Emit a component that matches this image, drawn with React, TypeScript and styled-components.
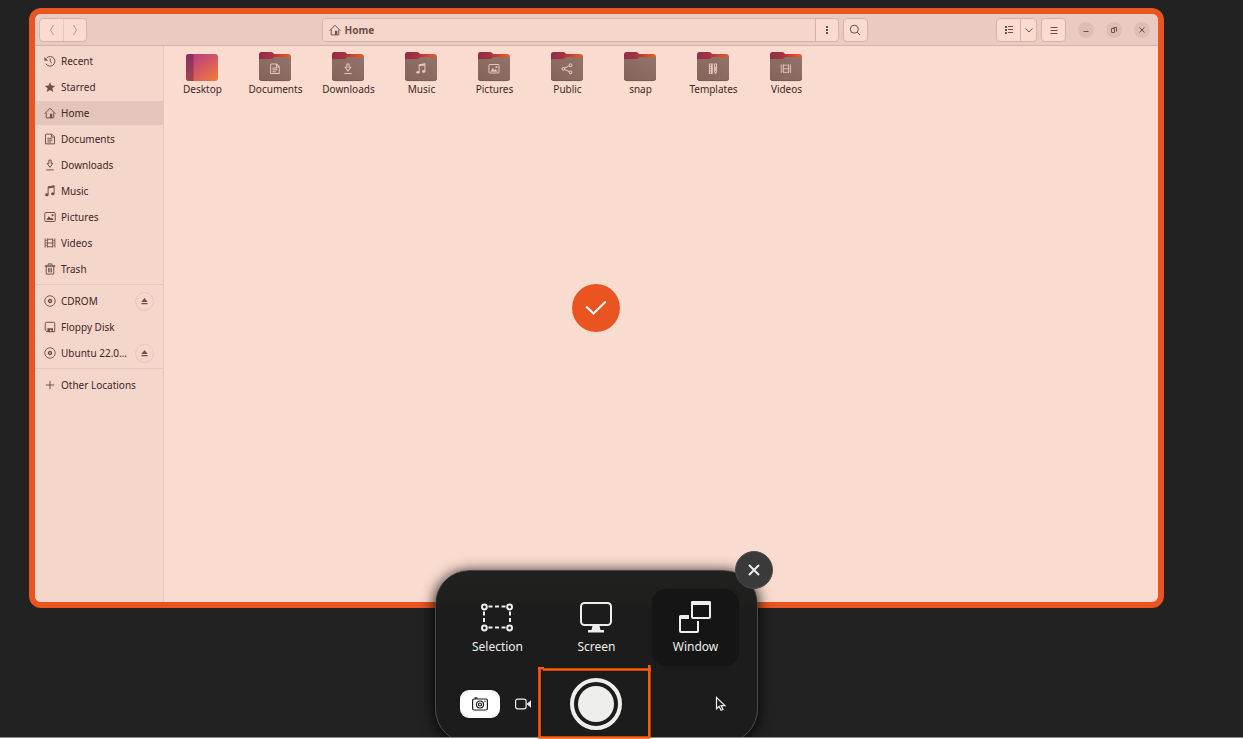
import React from "react";
import styled, { createGlobalStyle } from "styled-components";

const ink = "#6f5049";
const edge = "#d3b4aa";

const GlobalStyle = createGlobalStyle`
  *, *::before, *::after { box-sizing: border-box; }
  body {
    margin: 0;
    background: #fff;
    font-family: "Noto Sans", sans-serif;
    font-size: 10px;
    line-height: 14px;
  }
  button { font: inherit; color: inherit; padding: 0; border: 0; background: none; }
  ul { list-style: none; margin: 0; padding: 0; }
  svg { display: block; flex: none; }
`;

const Page = styled.main`
  position: relative;
  height: 100vh;
  min-height: 480px;
  display: flex;
  flex-direction: column;
  overflow: hidden;
`;

const Desktop = styled.div`
  position: relative;
  flex: 1;
  min-height: 0;
  margin-bottom: 1px;
  display: flex;
  padding: 8px 79px 129px 29px;
  background: #222;
  border-bottom: 1px solid #8c8c8c;
  overflow: hidden;
`;

const FileWindow = styled.section`
  position: relative;
  flex: 1;
  min-width: 0;
  display: flex;
  flex-direction: column;
  border: 6px solid #e95420;
  border-radius: 12px;
  background: #fadbd0;
  color: #42261f;
  overflow: hidden;
`;

const HeaderBar = styled.header`
  display: grid;
  grid-template-columns: 1fr auto 1fr;
  align-items: center;
  height: 32px;
  padding: 0 8px 0 4px;
  background: #e9cbc1;
  border-bottom: 1px solid ${edge};
  color: ${ink};
`;

const HeaderCell = styled.div<{ $end?: boolean }>`
  display: flex;
  align-items: center;
  justify-content: ${(p) => (p.$end ? "flex-end" : "flex-start")};
  gap: 4px;
`;

const Linked = styled.div`
  display: flex;
  height: 24px;
  border: 1px solid ${edge};
  border-radius: 4px;
  background: #fadbd0;
  overflow: hidden;
  > * + * { border-left: 1px solid ${edge}; }
`;

const ToolButton = styled.button<{ $narrow?: boolean; $dim?: boolean }>`
  width: ${(p) => (p.$narrow ? 16 : 23)}px;
  display: flex;
  align-items: center;
  justify-content: center;
  opacity: ${(p) => (p.$dim ? 0.5 : 1)};
`;

const PathBar = styled(Linked)`
  width: min(517px, 46vw);
`;

const PathCrumb = styled.div`
  flex: 1;
  display: flex;
  align-items: center;
  gap: 4px;
  padding-left: 6px;
  background: #f5d6cb;
  font-weight: 700;
`;

const WindowControls = styled.div`
  display: flex;
  gap: 12px;
  margin-left: 8px;
`;

const WindowControl = styled.button`
  display: grid;
  place-items: center;
  width: 16px;
  height: 16px;
  border-radius: 50%;
  background: #dcbeb4;
`;

const Body = styled.div`
  flex: 1;
  min-height: 0;
  display: flex;
`;

const Sidebar = styled.nav`
  width: 129px;
  flex: none;
  padding-top: 3px;
  background: #f5d6cb;
  border-right: 1px solid #e6c6bc;
`;

const Places = styled.ul`
  display: flex;
  flex-direction: column;
  gap: 2px;
  & + & {
    margin-top: 3px;
    padding-top: 4px;
    border-top: 1px solid #e6c6bc;
  }
`;

const Place = styled.li<{ $active?: boolean }>`
  display: flex;
  align-items: center;
  height: 24px;
  padding: 0 9px;
  background: ${(p) => (p.$active ? "#e3c5bb" : "transparent")};
`;

const PlaceLink = styled.a`
  flex: 1;
  display: flex;
  align-items: center;
  gap: 5px;
  color: inherit;
  text-decoration: none;
  white-space: nowrap;
  svg { color: ${ink}; }
`;

const EjectButton = styled.button`
  display: grid;
  place-items: center;
  width: 19px;
  height: 19px;
  border: 1px solid #e6c6bc;
  border-radius: 50%;
  color: ${ink};
`;

const FileGrid = styled.ul`
  flex: 1;
  display: flex;
  flex-wrap: wrap;
  align-content: flex-start;
  && { padding: 5px 2px; }
`;

const FileItem = styled.li`
  width: 73px;
  display: flex;
  flex-direction: column;
  align-items: center;
`;

const CheckBadge = styled.div`
  position: absolute;
  top: 50%;
  left: 50%;
  width: 48px;
  height: 48px;
  margin: -24px -25px;
  display: grid;
  place-items: center;
  border-radius: 50%;
  background: #e95420;
  color: #fff;
`;

const PanelLayer = styled.div`
  position: absolute;
  inset: 0 50px -6px 0;
  display: flex;
  justify-content: center;
  align-items: flex-end;
`;

const Panel = styled.section`
  position: relative;
  width: 323px;
  padding: 18px 18px 12px;
  display: flex;
  flex-direction: column;
  gap: 12px;
  border: 1px solid #4a4a49;
  border-radius: 34px;
  background: linear-gradient(#20201e 0, #1f1f1d 30px, #1c1c1c 40px);
  box-shadow: 0 2px 14px 1px rgba(0, 0, 0, 0.85);
  color: #eeeeec;
`;

const CloseButton = styled.button`
  position: absolute;
  top: -20px;
  right: -16px;
  width: 38px;
  height: 38px;
  display: grid;
  place-items: center;
  border: 1px solid #4c4c4c;
  border-radius: 50%;
  background: #3a3a3a;
`;

const Modes = styled.div`
  display: grid;
  grid-template-columns: repeat(3, 1fr);
  gap: 12px;
`;

const ModeButton = styled.button<{ $active?: boolean }>`
  height: 77px;
  display: flex;
  flex-direction: column;
  align-items: center;
  justify-content: center;
  gap: 6px;
  border-radius: 14px;
  background: ${(p) => (p.$active ? "#151515" : "transparent")};
  font-size: 12px;
  line-height: 16px;
`;

const CaptureRow = styled.div`
  display: grid;
  grid-template-columns: 1fr auto 1fr;
  align-items: center;
  padding-right: 1px;
`;

const MediaSwitch = styled.div`
  display: flex;
  gap: 3px;
  margin-left: 6px;
`;

const MediaButton = styled.button<{ $active?: boolean }>`
  width: 40px;
  height: 28px;
  display: grid;
  place-items: center;
  border-radius: 9px;
  background: ${(p) => (p.$active ? "#fff" : "transparent")};
  color: ${(p) => (p.$active ? "#1e1e1d" : "#eeeeec")};
`;

const Shutter = styled.button`
  width: 52px;
  height: 52px;
  border: 4px solid #eeeeec;
  border-radius: 50%;
  padding: 4px;
  &::before {
    content: "";
    display: block;
    height: 100%;
    border-radius: 50%;
    background: #eeeeec;
  }
`;

const Pointer = styled.svg`
  justify-self: end;
  margin-right: 11px;
`;

const MarkLayer = styled.div`
  position: absolute;
  inset: auto 50px 0 0;
  display: flex;
  justify-content: center;
  padding-right: 4px;
  pointer-events: none;
`;

type IconName =
  | "recent" | "star" | "home" | "document" | "download" | "music" | "picture"
  | "video" | "trash" | "disc" | "floppy" | "plus" | "share" | "template";

const glyphs: Record<IconName, React.ReactNode> = {
  recent: (
    <>
      <path d="M3.500 4A6.400 6.400 0 1 1 2.500 11.500M8.300 4.500v4.300l2.200 2" />
      <path d="M.5 2.500v5h5z" fill="currentColor" stroke="none" />
    </>
  ),
  star: <path d="M8 1.500l2 4.600 4.900.4-3.700 3.300 1.100 4.900L8 12.100l-4.300 2.600 1.100-4.900L1.100 6.500 6 6.100z" fill="currentColor" stroke="none" />,
  home: (
    <>
      <path d="M.8 9L8 1.600 15.200 9M3 7.500v7h10v-7" />
      <path d="M8 9h3v5.500H8z" fill="currentColor" stroke="none" />
    </>
  ),
  document: <path d="M3 1.500h7.500L14 5v9.500H2V2.500q0-1 1-1zM10 1.500V5.500h4M4.500 7h6M4.500 9.500h7M4.500 12h5" />,
  download: <path d="M6.500 1.500h3v4.300h2.300L8 11.200 4.200 5.800h2.300zM3 14.500h10" />,
  music: (
    <>
      <path d="M5.500 12.500V2.500l8-1.200v10" />
      <path d="M5.500 2l8-1.200v2.500l-8 1.200z" fill="currentColor" stroke="none" />
      <ellipse cx="3.800" cy="13" rx="2.300" ry="2" fill="currentColor" stroke="none" />
      <ellipse cx="11.800" cy="11.800" rx="2.300" ry="2" fill="currentColor" stroke="none" />
    </>
  ),
  picture: (
    <>
      <rect x="1" y="2" width="14" height="12" rx="1.500" />
      <path d="M3 12l3.500-5 2.500 3 1.500-1.500L13 12z" fill="currentColor" stroke="none" />
      <circle cx="11.500" cy="5.500" r="1.400" fill="currentColor" stroke="none" />
    </>
  ),
  video: (
    <>
      <path d="M1.500 2v12M14.500 2v12M4.500 2v12M11.500 2v12M4.500 3h7M4.500 8h7M4.500 13h7" strokeWidth="1.200" />
      <path d="M1.500 4.500h3M1.500 8h3M1.500 11.500h3M11.500 4.500h3M11.500 8h3M11.500 11.500h3" strokeWidth=".8" />
    </>
  ),
  trash: (
    <>
      <path d="M5.500 3V1.200h5V3M3 4v10.800h10V4M6.300 6.500v6M9.700 6.500v6" />
      <path d="M1 3h14v2H1z" fill="currentColor" stroke="none" />
      <path d="M5.500 6.500h5v6h-5z" fill="currentColor" stroke="none" opacity=".4" />
    </>
  ),
  disc: (
    <>
      <circle cx="8" cy="8" r="7" strokeWidth="1.200" />
      <circle cx="8" cy="8" r="2" strokeWidth="1.800" />
    </>
  ),
  floppy: (
    <>
      <path d="M1.700 3q0-1.300 1.300-1.300h10q1.300 0 1.300 1.300v11.300H4l-2.300-2z" />
      <path d="M4.500 14.500V9.500h7.500v5h-2V11.500H8v3z" fill="currentColor" stroke="none" />
    </>
  ),
  plus: <path d="M8 2.500v11M2.500 8h11" />,
  share: (
    <>
      <circle cx="3" cy="8" r="1.900" />
      <circle cx="13" cy="3" r="1.900" />
      <circle cx="13" cy="13" r="1.900" />
      <path d="M5 7l6-3M5 9l6 3" />
    </>
  ),
  template: (
    <>
      <path d="M3 1.500h4v13H3zM3 5h2M3 8h2M3 11h2M10 1.500h3v10l-1.500 3-1.500-3z" />
      <path d="M5 2h2v12H5zM10 5h2v6h-2z" fill="currentColor" stroke="none" />
    </>
  ),
};

function Icon({ name, size = 12 }: { name: IconName; size?: number }) {
  return (
    <svg width={size} height={size} viewBox="0 0 16 16" fill="none" stroke="currentColor" strokeWidth="1.300" aria-hidden="true">
      {glyphs[name]}
    </svg>
  );
}

function FolderArt({ icon }: { icon?: IconName }) {
  return (
    <svg width="33" height="31" viewBox="0 0 33 31" aria-hidden="true">
      <path d="M0 3.500Q0 1 2.500 1H12q1.500 0 2.300 1l.7 1H29q3 0 3 3v8H0z" fill="url(#folderBack)" />
      <path d="M0 9q0-1 1.200-1h11q1 0 1.800-.8l.6-.6Q15.200 6 16.200 6H31q1 0 1 1v20q0 3-3 3H3q-3 0-3-3z" fill="url(#folderFront)" />
      <path d="M.3 27q0 2.600 2.700 2.600h26q2.700 0 2.700-2.600" fill="none" stroke="#77584f" strokeWidth=".8" />
      {icon && (
        <g transform="translate(10.200 12) scale(.72)" fill="none" stroke="currentColor" strokeWidth="1.400" color="#e3c5bb">
          {glyphs[icon]}
        </g>
      )}
    </svg>
  );
}

function DesktopArt() {
  return (
    <svg width="33" height="31" viewBox="0 0 33 31" aria-hidden="true">
      <rect y="3" width="32" height="27" rx="3" fill="url(#desktopFill)" />
      <path d="M3 3h4.500v27H3q-3 0-3-3V6q0-3 3-3z" fill="url(#desktopDock)" />
    </svg>
  );
}

const places: { label: string; icon: IconName; active?: boolean }[] = [
  { label: "Recent", icon: "recent" },
  { label: "Starred", icon: "star" },
  { label: "Home", icon: "home", active: true },
  { label: "Documents", icon: "document" },
  { label: "Downloads", icon: "download" },
  { label: "Music", icon: "music" },
  { label: "Pictures", icon: "picture" },
  { label: "Videos", icon: "video" },
  { label: "Trash", icon: "trash" },
];

const drives: { label: string; icon: IconName; eject?: boolean }[] = [
  { label: "CDROM", icon: "disc", eject: true },
  { label: "Floppy Disk", icon: "floppy" },
  { label: "Ubuntu 22.0…", icon: "disc", eject: true },
];

const folders: { label: string; icon?: IconName; desktop?: boolean }[] = [
  { label: "Desktop", desktop: true },
  { label: "Documents", icon: "document" },
  { label: "Downloads", icon: "download" },
  { label: "Music", icon: "music" },
  { label: "Pictures", icon: "picture" },
  { label: "Public", icon: "share" },
  { label: "snap" },
  { label: "Templates", icon: "template" },
  { label: "Videos", icon: "video" },
];

function Line({ d, size = 12, width = 1 }: { d: string; size?: number; width?: number }) {
  return (
    <svg width={size} height={size} viewBox={`0 0 ${size} ${size}`} fill="none" stroke="currentColor" strokeWidth={width} aria-hidden="true">
      <path d={d} />
    </svg>
  );
}

function Gradients() {
  return (
    <svg width="0" height="0" style={{ position: "absolute" }} aria-hidden="true">
      <defs>
        <linearGradient id="folderBack" x1="0" y1="0" x2="1" y2="0">
          <stop offset="0" stopColor="#8f2d4b" />
          <stop offset=".4" stopColor="#a8323f" />
          <stop offset=".75" stopColor="#dc4a27" />
          <stop offset="1" stopColor="#ee5a26" />
        </linearGradient>
        <linearGradient id="folderFront" x1="0" y1="1" x2="1" y2="0">
          <stop offset="0" stopColor="#82645b" />
          <stop offset=".5" stopColor="#8a6c62" />
          <stop offset="1" stopColor="#917369" />
        </linearGradient>
        <linearGradient id="desktopFill" x1="0.100" y1="0" x2="1" y2="1">
          <stop offset="0" stopColor="#b43c82" />
          <stop offset=".45" stopColor="#d35566" />
          <stop offset="1" stopColor="#f57c36" />
        </linearGradient>
        <linearGradient id="desktopDock" x1="0" y1="0" x2="0" y2="1">
          <stop offset="0" stopColor="#853263" />
          <stop offset="1" stopColor="#a44350" />
        </linearGradient>
      </defs>
    </svg>
  );
}

function FileManager() {
  return (
    <FileWindow aria-label="Files">
      <HeaderBar>
        <HeaderCell>
          <Linked>
            <ToolButton $dim aria-label="Back"><Line d="M7.500 1L4.500 6l3 5" /></ToolButton>
            <ToolButton $dim aria-label="Forward"><Line d="M4.500 1l3 5-3 5" /></ToolButton>
          </Linked>
        </HeaderCell>
        <HeaderCell>
          <PathBar>
            <PathCrumb><Icon name="home" />Home</PathCrumb>
            <ToolButton aria-label="Path options">
              <svg width="12" height="12" viewBox="0 0 12 12" fill="currentColor" aria-hidden="true">
                <path d="M5 2h2v2H5zM5 5h2v2H5zM5 8h2v2H5z" />
              </svg>
            </ToolButton>
          </PathBar>
          <Linked>
            <ToolButton aria-label="Search">
              <Line d="M9.300 5.200a4 4 0 1 1-8 0a4 4 0 1 1 8 0M8.200 8.200L11 11" />
            </ToolButton>
          </Linked>
        </HeaderCell>
        <HeaderCell $end>
          <Linked>
            <ToolButton aria-label="List view">
              <svg width="12" height="12" viewBox="0 0 12 12" fill="currentColor" aria-hidden="true">
                <path d="M2 2h2v2H2zM2 5h2v2H2zM2 8h2v2H2zM5 2h5v1H5zM5 5h5v1H5zM5 8h5v1H5z" />
              </svg>
            </ToolButton>
            <ToolButton $narrow aria-label="View options"><Line size={10} d="M1.500 3.500L5 7l3.500-3.500" /></ToolButton>
          </Linked>
          <Linked>
            <ToolButton aria-label="Menu"><Line d="M2.500 3.500h7M2.500 6.500h7M2.500 9.500h7" /></ToolButton>
          </Linked>
          <WindowControls>
            <WindowControl aria-label="Minimize"><Line size={10} d="M2.500 6.500h5" /></WindowControl>
            <WindowControl aria-label="Restore"><Line size={10} d="M2.500 3.500h3v4h-3zM4.500 2.500h3v4" /></WindowControl>
            <WindowControl aria-label="Close window"><Line size={10} d="M2.500 2.500l5 5M7.500 2.500l-5 5" /></WindowControl>
          </WindowControls>
        </HeaderCell>
      </HeaderBar>
      <Body>
        <Sidebar aria-label="Places">
          <Places>
            {places.map((p) => (
              <Place key={p.label} $active={p.active}>
                <PlaceLink href="#"><Icon name={p.icon} />{p.label}</PlaceLink>
              </Place>
            ))}
          </Places>
          <Places>
            {drives.map((d) => (
              <Place key={d.label}>
                <PlaceLink href="#"><Icon name={d.icon} />{d.label}</PlaceLink>
                {d.eject && (
                  <EjectButton aria-label={`Eject ${d.label}`}>
                    <svg width="7" height="7" viewBox="0 0 7 7" fill="currentColor" aria-hidden="true">
                      <path d="M3.500 0L6.700 4H.3zM.5 5h6v1.200h-6z" />
                    </svg>
                  </EjectButton>
                )}
              </Place>
            ))}
          </Places>
          <Places>
            <Place>
              <PlaceLink href="#"><Icon name="plus" />Other Locations</PlaceLink>
            </Place>
          </Places>
        </Sidebar>
        <FileGrid>
          {folders.map((f) => (
            <FileItem key={f.label}>
              {f.desktop ? <DesktopArt /> : <FolderArt icon={f.icon} />}
              {f.label}
            </FileItem>
          ))}
        </FileGrid>
      </Body>
      <CheckBadge>
        <svg width="22" height="16" viewBox="0 0 22 16" fill="none" stroke="currentColor" strokeWidth="2" aria-hidden="true">
          <path d="M1.200 6.500L8.500 13.500 20.800 1.500" />
        </svg>
      </CheckBadge>
    </FileWindow>
  );
}

function ScreenshotPanel() {
  return (
    <PanelLayer>
      <Panel aria-label="Screenshot">
        <CloseButton aria-label="Close"><Line size={12} width={2} d="M1 1l10 10M11 1L1 11" /></CloseButton>
        <Modes>
          <ModeButton>
            <svg width="33" height="32" viewBox="0 0 33 32" fill="none" stroke="currentColor" strokeWidth="2" aria-hidden="true">
              <path d="M7.500 5.500h19M7.500 26.500h19" strokeDasharray="4 2.500" />
              <path d="M3 10.500v13M29 10.500v13" strokeDasharray="4 2.500" />
              <circle cx="3.400" cy="6" r="2.400" />
              <circle cx="28.600" cy="6" r="2.400" />
              <circle cx="3.400" cy="27" r="2.400" />
              <circle cx="28.600" cy="27" r="2.400" />
            </svg>
            Selection
          </ModeButton>
          <ModeButton>
            <svg width="33" height="32" viewBox="0 0 33 32" fill="none" stroke="currentColor" strokeWidth="2" aria-hidden="true">
              <rect x="1" y="2" width="30" height="22" rx="3.500" />
              <path d="M12.500 25h7l1 4H24v2.500H8V29h3.500z" fill="currentColor" stroke="none" />
            </svg>
            Screen
          </ModeButton>
          <ModeButton $active>
            <svg width="33" height="32" viewBox="0 0 33 32" fill="none" stroke="currentColor" strokeWidth="2" aria-hidden="true">
              <rect x="13" y="1" width="18" height="16" rx="1" />
              <path d="M12 1.500q0-1.500 1.500-1.500h17q1.500 0 1.500 1.500V4H12zM0 15.500Q0 14 1.500 14H10v4H0z" fill="currentColor" stroke="none" />
              <path d="M1 17v13q0 1 1 1h16q1 0 1-1V20" />
            </svg>
            Window
          </ModeButton>
        </Modes>
        <CaptureRow>
          <MediaSwitch>
            <MediaButton $active aria-label="Take screenshot">
              <svg width="16" height="14" viewBox="0 0 16 14" fill="none" stroke="currentColor" aria-hidden="true">
                <rect x=".6" y="2" width="14.800" height="11" rx="1.500" strokeWidth="1.200" />
                <path d="M2.500 1h3" strokeWidth="1.400" />
                <circle cx="8" cy="7.500" r="3.500" strokeWidth="1.200" />
                <circle cx="8" cy="7.500" r="1.500" strokeWidth="1.200" />
                <circle cx="13" cy="4.300" r=".7" fill="currentColor" stroke="none" />
              </svg>
            </MediaButton>
            <MediaButton aria-label="Record screen">
              <svg width="16" height="12" viewBox="0 0 16 12" fill="none" stroke="currentColor" strokeWidth="1.200" aria-hidden="true">
                <rect x=".6" y="1.200" width="10.500" height="9.600" rx="2" />
                <path d="M11.500 6L16 2.200v7.600z" fill="currentColor" stroke="none" />
              </svg>
            </MediaButton>
          </MediaSwitch>
          <Shutter aria-label="Capture" />
          <Pointer width="12" height="16" viewBox="0 0 12 16" aria-hidden="true">
            <path d="M1.500 1.500v11.300l2.600-2.500 1.900 4 2-.9-1.900-3.800h3.800z" fill="#1a1a1a" stroke="#eeeeec" strokeWidth="1.200" />
          </Pointer>
        </CaptureRow>
      </Panel>
    </PanelLayer>
  );
}

export default function App() {
  return (
    <Page>
      <GlobalStyle />
      <Gradients />
      <Desktop>
        <FileManager />
        <ScreenshotPanel />
      </Desktop>
      <MarkLayer>
        <svg width="113" height="74" viewBox="0 0 113 74" fill="none" stroke="#ff5a0a" strokeWidth="2.600" aria-hidden="true">
          <path d="M1.500 2v71M0 3.200h6M5 4.500h108M111.300 0v73M0 72.500h112" />
        </svg>
      </MarkLayer>
    </Page>
  );
}
